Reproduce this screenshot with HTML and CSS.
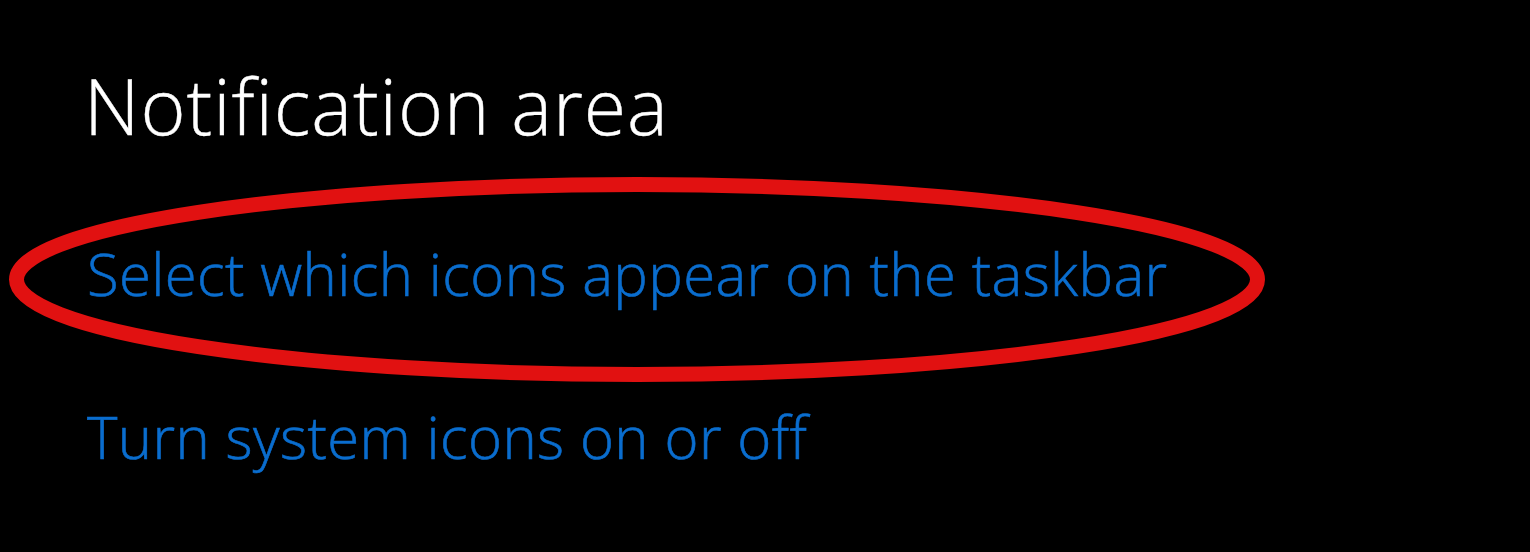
FILE: index.html
```html
<!DOCTYPE html>
<html lang="en">
<head>
<meta charset="utf-8">
<title>Notification area</title>
<link rel="stylesheet" href="styles.css">
</head>
<body>
<main class="page">
  <section class="section">
    <h1 class="title">Notification area</h1>
    <a class="link link-first" href="#">Select which icons appear on the taskbar</a>
    <a class="link link-second" href="#">Turn system icons on or off</a>
  </section>
  <svg class="annotation" width="1530" height="552" viewBox="0 0 1530 552" aria-hidden="true">
    <ellipse cx="637" cy="279.5" rx="620.5" ry="95" fill="none" stroke="#e11111" stroke-width="15"/>
  </svg>
</main>
</body>
</html>
```

FILE: styles.css
```css
html, body {
  margin: 0;
  padding: 0;
  background: #000;
}

.page {
  position: relative;
  width: 1530px;
  height: 552px;
  overflow: hidden;
  background: #000;
}

.section {
  display: flex;
  flex-direction: column;
  align-items: flex-start;
  padding: 67px 0 0 84px;
  font-family: "Open Sans", "Noto Sans", "Liberation Sans", sans-serif;
}

.title {
  margin: 0;
  font-size: 77px;
  line-height: 77px;
  font-weight: 300;
  color: #fff;
  letter-spacing: 0.9px;
  -webkit-text-stroke: 0.4px #fff;
}

.link {
  display: block;
  font-size: 58px;
  line-height: 58px;
  font-weight: 300;
  color: #0a6dce;
  text-decoration: none;
  letter-spacing: 0.4px;
  -webkit-text-stroke: 0.6px #0a6dce;
}

.link-first {
  margin-top: 101px;
  margin-left: 3px;
}

.link-second {
  margin-top: 105px;
  margin-left: 3px;
}

.annotation {
  position: absolute;
  left: 0;
  top: 0;
  pointer-events: none;
}
```
